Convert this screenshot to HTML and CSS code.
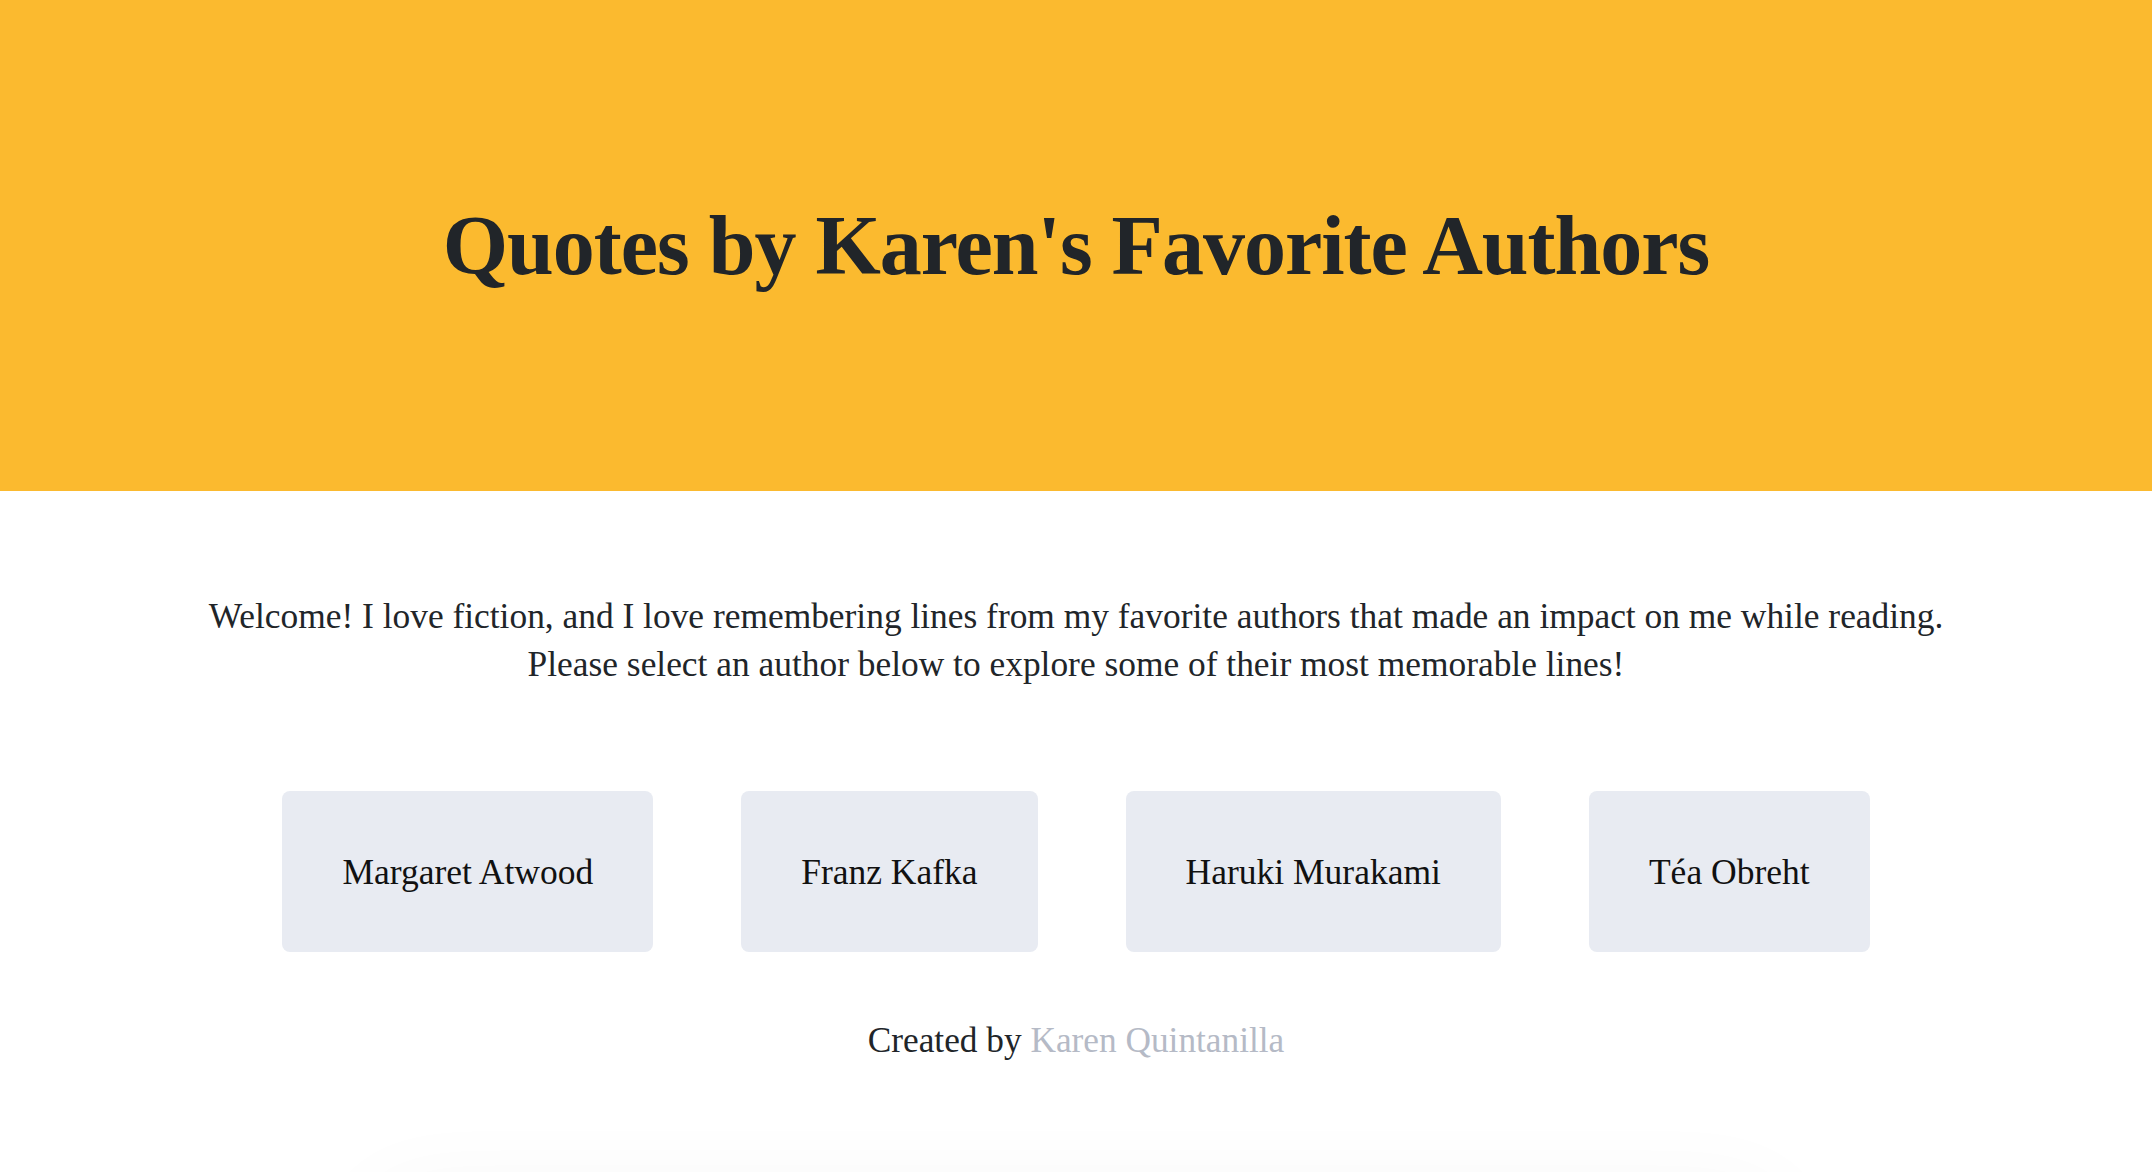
FILE: index.html
```html
<!DOCTYPE html>
<html lang="en">
<head>
<meta charset="utf-8">
<title>Quotes by Karen's Favorite Authors</title>
<link rel="stylesheet" href="styles.css">
</head>
<body>
<header class="hero">
  <h1 class="hero-title">Quotes by Karen's Favorite Authors</h1>
</header>
<main class="content">
  <p class="intro">Welcome! I love fiction, and I love remembering lines from my favorite authors that made an impact on me while reading.<br>Please select an author below to explore some of their most memorable lines!</p>
  <nav class="authors">
    <button class="author-btn">Margaret Atwood</button>
    <button class="author-btn">Franz Kafka</button>
    <button class="author-btn">Haruki Murakami</button>
    <button class="author-btn">Téa Obreht</button>
  </nav>
  <p class="credit">Created by <a class="credit-link" href="#">Karen Quintanilla</a></p>
  <section class="quote-card"></section>
</main>
</body>
</html>
```
FILE: styles.css
```css
html, body {
  margin: 0;
  padding: 0;
  background: #ffffff;
}
body {
  font-family: "Liberation Serif", "Times New Roman", serif;
  color: #212529;
  overflow: hidden;
}
.hero {
  background: #fbba2f;
  height: 491px;
  display: flex;
  align-items: center;
  justify-content: center;
}
.hero-title {
  margin: 0;
  font-size: 84px;
  font-weight: 700;
  color: #212529;
  letter-spacing: -1px;
}
.content {
  display: flex;
  flex-direction: column;
  align-items: center;
}
.intro {
  margin: 101px 0 0;
  font-size: 35.4px;
  line-height: 48px;
  text-align: center;
}
.authors {
  display: flex;
  gap: 88px;
  margin-top: 103px;
}
.author-btn {
  font-family: inherit;
  font-size: 35.5px;
  color: #111;
  background: #e8ebf2;
  border: none;
  border-radius: 8px;
  height: 161px;
  padding: 0 60px;
}
.credit {
  margin: 65px 0 0;
  font-size: 35.3px;
  line-height: 48px;
}
.credit-link {
  color: #b5bac6;
  text-decoration: none;
}
.quote-card {
  margin-top: 130px;
  width: 1400px;
  height: 300px;
  border-radius: 40px;
  background: #fafafa;
  box-shadow: 0 0 90px 10px rgba(0,0,0,0.035);
}
```
